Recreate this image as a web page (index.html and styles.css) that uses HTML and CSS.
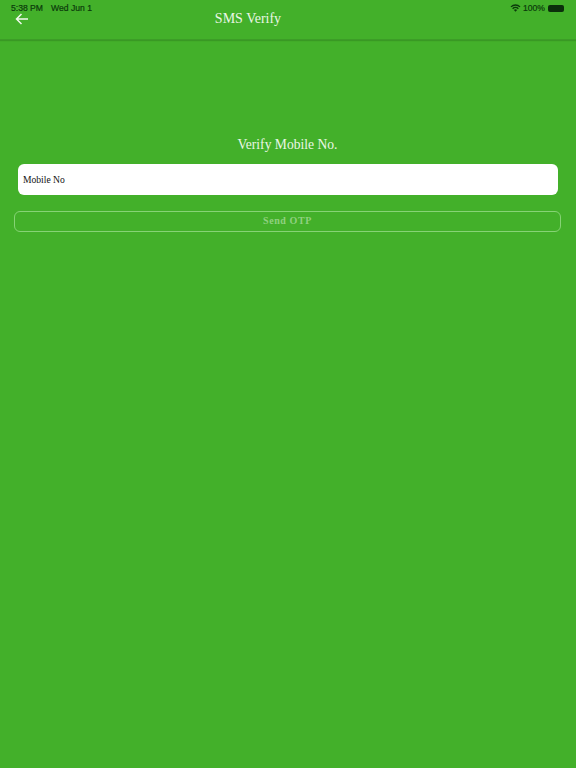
FILE: index.html
```html
<!DOCTYPE html>
<html lang="en">
<head>
<meta charset="utf-8">
<title>SMS Verify</title>
<link rel="stylesheet" href="styles.css">
</head>
<body>
<div class="status">
  <div class="status-left"><span>5:38 PM</span><span>Wed Jun 1</span></div>
  <div class="status-right">
    <svg class="wifi" viewBox="0 0 16 12" width="11" height="8"><path d="M8 11.5 5.6 8.9a3.4 3.4 0 0 1 4.8 0z" fill="#0b3a0b"/><path d="M3.7 7a6.2 6.2 0 0 1 8.6 0" fill="none" stroke="#0b3a0b" stroke-width="2"/><path d="M1.2 4.3a9.8 9.8 0 0 1 13.6 0" fill="none" stroke="#0b3a0b" stroke-width="2"/></svg>
    <span>100%</span>
    <div class="battery"></div>
  </div>
</div>
<header class="nav">
  <svg class="back" viewBox="0 0 14 12" width="14" height="12"><path d="M13 6H1.5M6.5 1 1.5 6l5 5" fill="none" stroke="#f1f8ee" stroke-width="1.5"/></svg>
  <h1 class="nav-title">SMS Verify</h1>
</header>
<main class="content">
  <h2 class="heading">Verify Mobile No.</h2>
  <div class="field">Mobile No</div>
  <div class="button">Send OTP</div>
</main>
</body>
</html>
```
FILE: styles.css
```css
* { box-sizing: border-box; }
html, body { margin: 0; height: 100%; }
body {
  width: 576px;
  height: 768px;
  overflow: hidden;
  background: #43b02a;
  font-family: "Liberation Serif", serif;
  position: relative;
}
.status {
  position: absolute;
  top: 3px;
  left: 11px;
  right: 12px;
  display: flex;
  justify-content: space-between;
  align-items: center;
  height: 10px;
  font-family: "Liberation Sans", sans-serif;
  font-size: 8.6px;
  -webkit-text-stroke: 0.2px #0b3a0b;
  color: #0b3a0b;
  z-index: 1;
}
.status-left { display: flex; gap: 8px; }
.status-right { display: flex; align-items: center; gap: 2px; }
.battery {
  width: 16px;
  height: 7px;
  margin-left: 1px;
  border-radius: 2px;
  background: #0b2f0b;
}
.nav {
  height: 40px;
  display: flex;
  align-items: center;
  justify-content: center;
  position: relative;
  padding: 0 80px 2px 0;
  border-bottom: 1px solid #3c9d27;
  box-shadow: 0 1px 1px rgba(40, 110, 25, 0.35);
}
.back { position: absolute; left: 15px; top: 13px; }
.nav-title {
  margin: 0;
  font-size: 14px;
  font-weight: 400;
  color: #eaf6e5;
}
.content {
  display: flex;
  flex-direction: column;
  align-items: center;
  padding: 96px 15px 0 14px;
}
.heading {
  margin: 0;
  height: 17px;
  line-height: 17px;
  font-size: 13.6px;
  font-weight: 400;
  color: #eaf6e5;
}
.field {
  width: 540px;
  height: 31px;
  margin-top: 11px;
  padding-left: 5.5px;
  display: flex;
  align-items: center;
  background: #fff;
  border-radius: 6px;
  font-size: 9.6px;
  color: #111;
}
.button {
  width: 547px;
  height: 21px;
  margin-top: 16px;
  padding-bottom: 2px;
  display: flex;
  align-items: center;
  justify-content: center;
  border: 1.5px solid #86d375;
  border-radius: 6px;
  font-size: 10px;
  font-weight: 700;
  letter-spacing: 0.6px;
  color: #90d180;
}
```
